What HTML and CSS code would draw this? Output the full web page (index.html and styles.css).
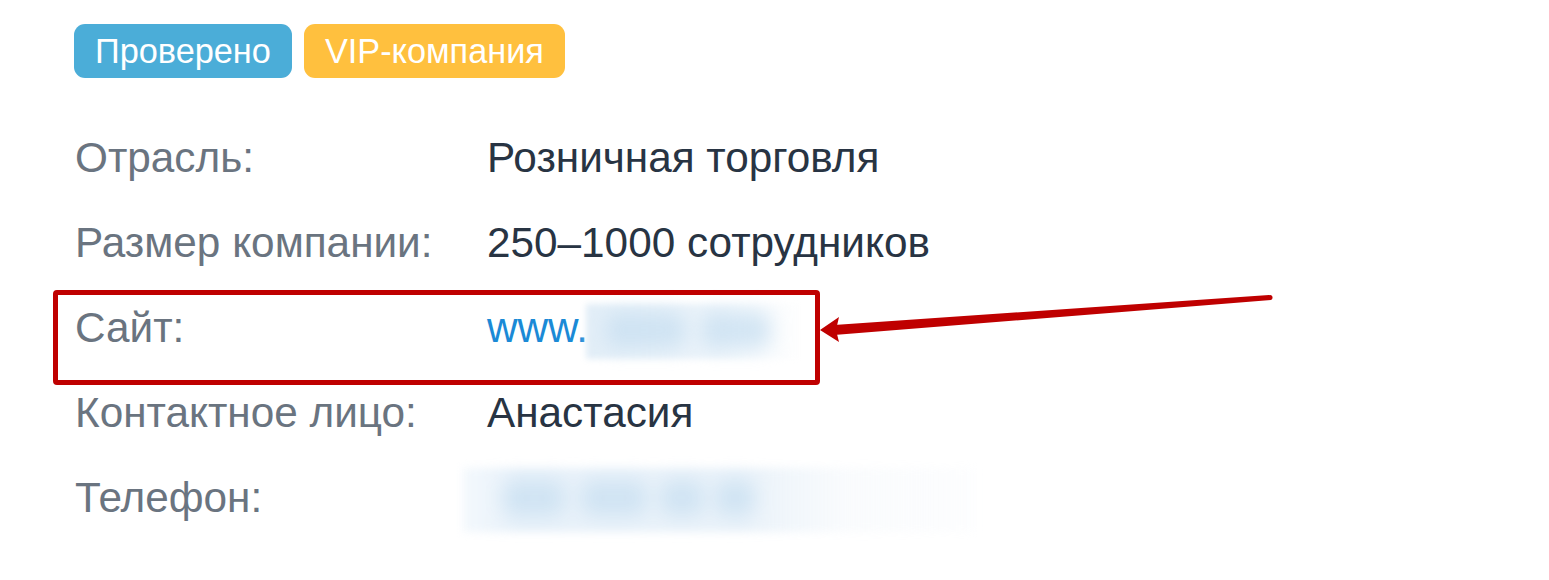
FILE: index.html
```html
<!DOCTYPE html>
<html lang="ru">
<head>
<meta charset="utf-8">
<title>Компания</title>
<link rel="stylesheet" href="styles.css">
</head>
<body>
<div class="page">
  <div class="badges">
    <span class="badge badge-blue">Проверено</span>
    <span class="badge badge-yellow">VIP-компания</span>
  </div>
  <div class="info">
    <div class="label">Отрасль:</div>
    <div class="value">Розничная торговля</div>
    <div class="label">Размер компании:</div>
    <div class="value">250–1000 сотрудников</div>
    <div class="label">Сайт:</div>
    <div class="value"><span class="link">www.</span><span class="blur-site"><span class="blob b1"></span><span class="blob b2"></span></span></div>
    <div class="label">Контактное лицо:</div>
    <div class="value">Анастасия</div>
    <div class="label">Телефон:</div>
    <div class="value"><span class="blur-phone"><span class="blob p1"></span><span class="blob p2"></span><span class="blob p3"></span><span class="blob p4"></span></span></div>
  </div>
  <div class="highlight"></div>
  <svg class="arrow" width="1549" height="580" viewBox="0 0 1549 580">
    <polygon points="834,325 1269,295 1271,300 834,335" fill="#bf0000"/>
    <polygon points="820,330 839,317 836,330 839,342" fill="#bf0000"/>
    <circle cx="1270" cy="297.5" r="2.5" fill="#bf0000"/>
  </svg>
</div>
</body>
</html>
```
FILE: styles.css
```css
* { box-sizing: border-box; }
html, body { margin: 0; padding: 0; background: #ffffff; }
body { font-family: "Liberation Sans", Arial, sans-serif; }
.page { position: relative; width: 1549px; height: 580px; padding: 24px 0 0 74px; overflow: hidden; }
.badges { display: flex; gap: 12px; }
.badge { display: inline-flex; align-items: center; height: 54px; padding: 0 21px; border-radius: 11px; color: #fff; font-size: 34.3px; }
.badge-blue { background: #4badd8; }
.badge-yellow { background: #ffc03e; }
.info { display: grid; grid-template-columns: 413px 1fr; grid-auto-rows: 85px; margin-top: 37px; font-size: 42.3px; }
.label, .value { display: flex; align-items: center; white-space: nowrap; }
.label { color: #6a7480; padding-left: 1px; }
.value { color: #283443; }
.link { color: #1b8ad6; }
.blur-site { position: relative; display: inline-block; width: 217px; height: 55px; margin-top: 8px; margin-left: -2px; background: linear-gradient(90deg, rgba(218,233,245,0.8) 0%, rgba(228,239,248,0.7) 60%, rgba(245,249,252,0.6) 85%, rgba(255,255,255,0) 100%); filter: blur(3px); }
.blur-phone { position: relative; display: inline-block; width: 512px; height: 64px; margin-left: -24px; margin-top: 5px; background: linear-gradient(90deg, rgba(238,245,251,0.7) 0%, rgba(230,240,249,0.9) 10%, rgba(232,241,249,0.9) 55%, rgba(246,249,252,0.6) 75%, rgba(250,251,253,0.4) 100%); filter: blur(4px); }
.blob { position: absolute; border-radius: 12px; background: rgba(198,222,241,0.7); filter: blur(9px); }
.b1 { left: 20px; top: 8px; width: 80px; height: 36px; }
.b2 { left: 115px; top: 8px; width: 70px; height: 36px; }
.p1 { left: 40px; top: 12px; width: 62px; height: 36px; }
.p2 { left: 118px; top: 12px; width: 66px; height: 36px; }
.p3 { left: 197px; top: 12px; width: 44px; height: 36px; }
.p4 { left: 252px; top: 12px; width: 40px; height: 36px; }
.highlight { position: absolute; left: 53px; top: 290px; width: 767px; height: 95px; border: 5px solid #bf0000; border-radius: 4px; }
.arrow { position: absolute; left: 0; top: 0; }
```
